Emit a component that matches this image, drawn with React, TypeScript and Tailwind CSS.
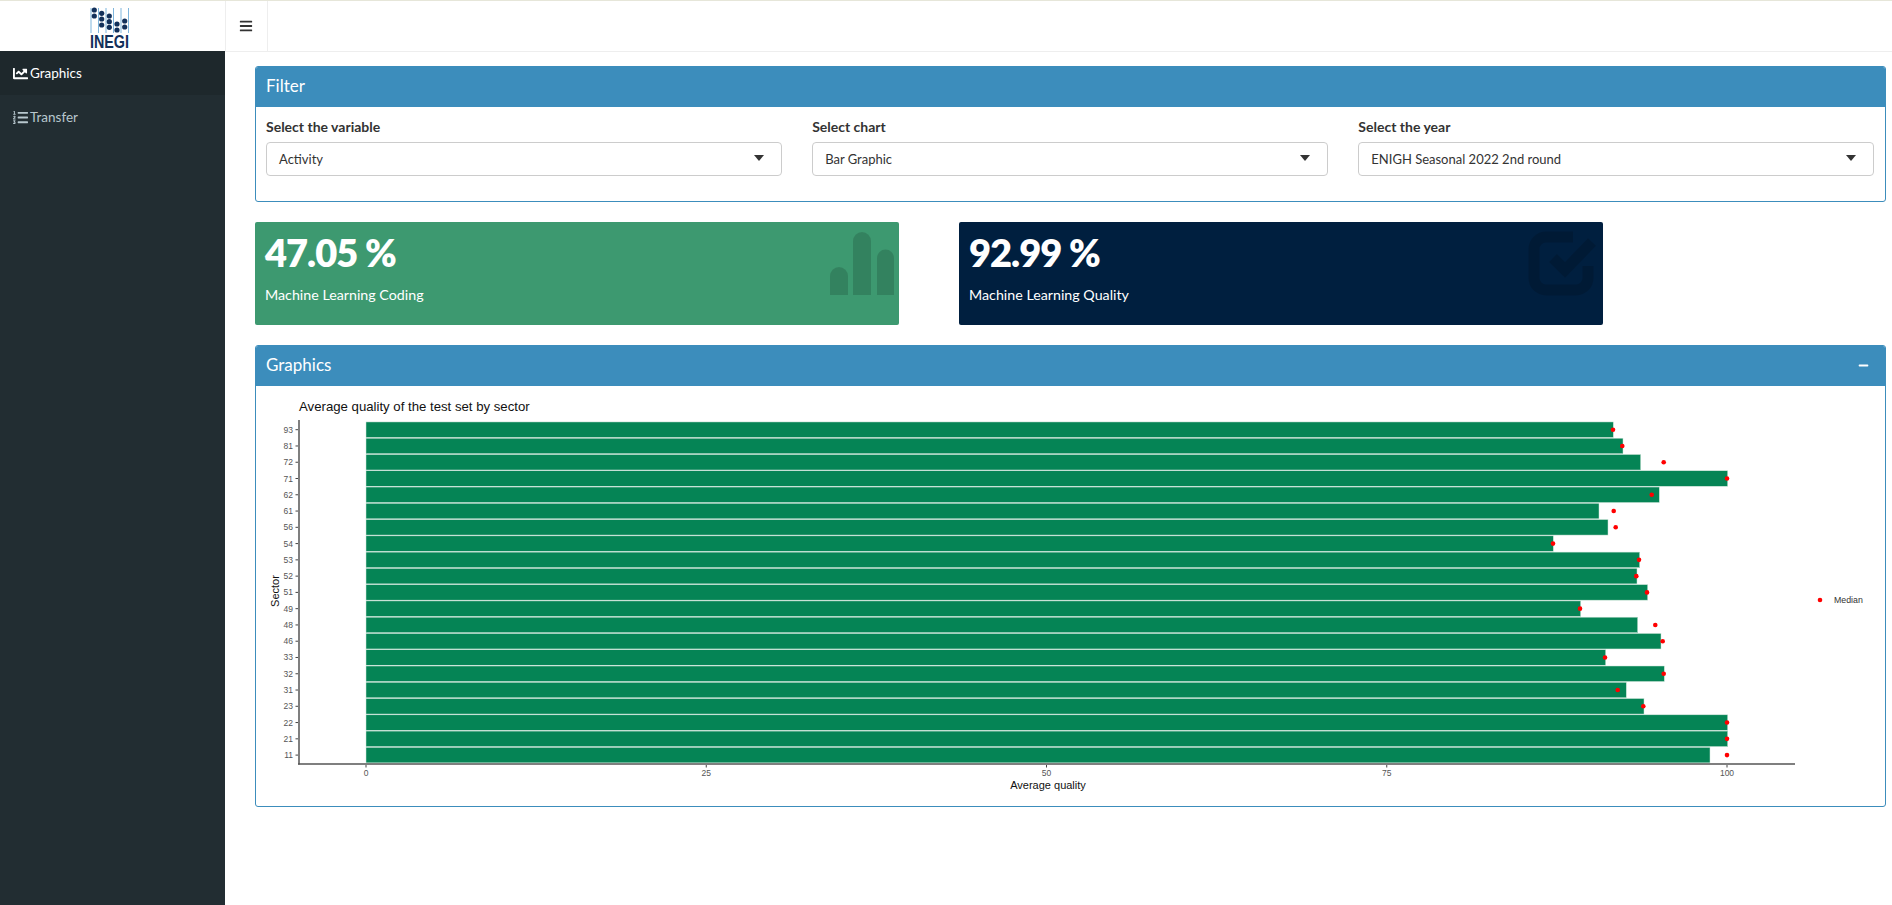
import { FaBars, FaChartLine, FaListOl, FaMinus } from "react-icons/fa";

const rows: [string, number, number][] = [
  ["93", 1613.3, 1613],
  ["81", 1623, 1622.3],
  ["72", 1640.7, 1663.7],
  ["71", 1727.7, 1727],
  ["62", 1659.3, 1651.7],
  ["61", 1599, 1613.7],
  ["56", 1608, 1615.7],
  ["54", 1553.3, 1553],
  ["53", 1639.7, 1639],
  ["52", 1637, 1636.3],
  ["51", 1647.7, 1647],
  ["49", 1580.7, 1580],
  ["48", 1637.7, 1655.3],
  ["46", 1661, 1662.7],
  ["33", 1605.7, 1605],
  ["32", 1664.3, 1663.7],
  ["31", 1626.3, 1617.7],
  ["23", 1644, 1643.3],
  ["22", 1727.7, 1727],
  ["21", 1727.7, 1727],
  ["11", 1710, 1727],
];

const xTicks = [0, 25, 50, 75, 100];
const logoLines = [91, 98.5, 106, 113.5, 121, 128.5];
const logoDots = [
  [94.3, 10], [94.3, 16],
  [101.7, 13.3], [101.7, 19], [101.7, 25],
  [109.3, 16], [109.3, 21.7], [109.3, 27.3],
  [117, 24], [117, 30],
  [124.7, 21], [124.7, 27],
];

function Logo() {
  return (
    <svg viewBox="85 4 50 46" className="w-[50px] h-[46px] overflow-visible">
      {logoLines.map((x) => (
        <line key={x} x1={x} x2={x} y1="8" y2="33" stroke="#7fb6dd" strokeWidth="1" />
      ))}
      {logoDots.map(([x, y]) => (
        <circle key={`${x}-${y}`} cx={x} cy={y} r="2.6" fill="#12305a" />
      ))}
      <text x="90" y="48" textLength="39" lengthAdjust="spacingAndGlyphs" fontFamily="Liberation Sans" fontWeight="700" fontSize="18" fill="#12305a">
        INEGI
      </text>
    </svg>
  );
}

function Sidebar() {
  return (
    <div className="w-[225px] shrink-0 flex flex-col bg-[#222d32]">
      <div className="h-[50px] bg-white flex items-start justify-center pt-[3px] pr-[5px]">
        <Logo />
      </div>
      <div className="h-[44px] bg-[#1e282c] text-white flex items-center pl-[13px] gap-[2px] text-[13.5px]">
        <FaChartLine size={15} />
        <span>Graphics</span>
      </div>
      <div className="h-[44px] text-[#b8c7ce] flex items-center pl-[13px] gap-[2px] text-[13.5px]">
        <FaListOl size={15} />
        <span>Transfer</span>
      </div>
    </div>
  );
}

function Select({ label, value }: { label: string; value: string }) {
  return (
    <div>
      <div className="h-[20px] leading-[20px] text-[14px] font-bold text-[#333] mb-[5px]">{label}</div>
      <div className="h-[34px] border border-[#ccc] rounded-[4px] flex items-center justify-between pl-[12px] pr-[17px] text-[13px] text-[#333]">
        <span className="pt-[1px]">{value}</span>
        <span className="w-0 h-0 border-x-[5.5px] border-x-transparent border-t-[6px] border-t-[#333] mb-[2px]" />
      </div>
    </div>
  );
}

function ValueBox({ value, text, color, icon }: { value: string; text: string; color: string; icon: React.ReactNode }) {
  return (
    <div className={`relative w-[644px] h-[103px] rounded-[2px] px-[10px] text-white ${color}`}>
      <div className="pt-[8px] h-[44px] text-[38px] leading-[44px] font-extrabold tracking-[-1px] box-content">{value}</div>
      <div className="mt-[11px] text-[14.25px] leading-[20px]">{text}</div>
      {icon}
    </div>
  );
}

function Chart() {
  return (
    <svg viewBox="256 386 1628 420" className="block w-[1628px] h-[420px]" fontFamily="Liberation Sans">
      <text x="299" y="411" fontSize="13.2" fill="#111">Average quality of the test set by sector</text>
      {rows.map(([name, end], i) => {
        const y = 429.7 + i * 16.27;
        return (
          <g key={name}>
            <rect x="366" y={y - 7.75} width={end - 366} height="15.5" fill="#058455" stroke="#cfe5da" strokeWidth="0.5" />
            <line x1="295.5" x2="298" y1={y} y2={y} stroke="#444" strokeWidth="1" />
            <text x="293" y={y + 3} textAnchor="end" fontSize="8.5" fill="#555">{name}</text>
          </g>
        );
      })}
      {rows.map(([name, , median], i) => (
        <circle key={name} cx={median} cy={429.7 + i * 16.27} r="2.3" fill="#ff0000" />
      ))}
      <line x1="299" x2="299" y1="420" y2="764.5" stroke="#555" strokeWidth="1.5" />
      <line x1="298" x2="1795" y1="764" y2="764" stroke="#555" strokeWidth="1.5" />
      {xTicks.map((t) => {
        const x = 366 + t * 13.61;
        return (
          <g key={t}>
            <line x1={x} x2={x} y1="765" y2="767.5" stroke="#444" strokeWidth="1" />
            <text x={x} y="776" textAnchor="middle" fontSize="8.5" fill="#555">{t}</text>
          </g>
        );
      })}
      <text x="1048" y="789" textAnchor="middle" fontSize="11" fill="#111">Average quality</text>
      <text transform="translate(279 591) rotate(-90)" textAnchor="middle" fontSize="11" fill="#111">Sector</text>
      <circle cx="1820" cy="600" r="2.3" fill="#ff0000" />
      <text x="1834" y="603" fontSize="8.8" fill="#333">Median</text>
    </svg>
  );
}

export default function App() {
  return (
    <div className="min-h-screen flex flex-col bg-white font-['Lato',sans-serif]">
      <div className="h-px bg-[#e6e6d9]" />
      <div className="flex flex-1">
        <Sidebar />
        <div className="flex-1 min-w-0">
          <div className="h-[51px] border-b border-[#eee] flex">
            <div className="w-[43px] border-x border-[#eee] flex items-center justify-center pr-[2px] text-[#333]">
              <FaBars size={14} />
            </div>
          </div>
          <div className="pl-[30px] pr-[6px] pt-[14px] flex flex-col gap-5">
            <div className="border border-[#3c8dbc] rounded-[3px] overflow-hidden">
              <div className="h-[40px] bg-[#3c8dbc] text-white text-[17px] leading-[38px] px-[10px]">Filter</div>
              <div className="grid grid-cols-3 gap-[30.5px] pl-[10px] pr-[11px] pt-[10px] pb-[25px]">
                <Select label="Select the variable" value="Activity" />
                <Select label="Select chart" value="Bar Graphic" />
                <Select label="Select the year" value="ENIGH Seasonal 2022 2nd round" />
              </div>
            </div>
            <div className="flex gap-[60px]">
              <ValueBox
                value="47.05 %"
                text="Machine Learning Coding"
                color="bg-[#3d9970]"
                icon={
                  <svg viewBox="0 0 64 63" className="absolute right-[5px] top-[10px] w-[64px] h-[63px]" fill="#000" fillOpacity="0.15">
                    <path d="M0 63V44a9 9 0 0 1 18 0v19z" />
                    <path d="M23 63V9a9 9 0 0 1 18 0v54z" />
                    <path d="M47 63V26a8.5 8.5 0 0 1 17 0v37z" />
                  </svg>
                }
              />
              <ValueBox
                value="92.99 %"
                text="Machine Learning Quality"
                color="bg-[#001f3f]"
                icon={
                  <svg viewBox="0 0 100 80" className="absolute right-[-7px] top-0 w-[100px] h-[80px]" fill="none" stroke="#000" strokeOpacity="0.15" strokeWidth="11">
                    <path d="M63 15H36a12 12 0 0 0-12 12v29a12 12 0 0 0 12 12h30a12 12 0 0 0 12-12V44" />
                    <path d="M43 36l12 12 27-28" />
                  </svg>
                }
              />
            </div>
            <div className="border border-[#3c8dbc] rounded-[3px] overflow-hidden">
              <div className="h-[40px] bg-[#3c8dbc] text-white text-[17px] px-[10px] pb-[2px] flex items-center justify-between">
                <span>Graphics</span>
                <FaMinus size={11} className="mr-[6px]" />
              </div>
              <Chart />
            </div>
          </div>
        </div>
      </div>
    </div>
  );
}
